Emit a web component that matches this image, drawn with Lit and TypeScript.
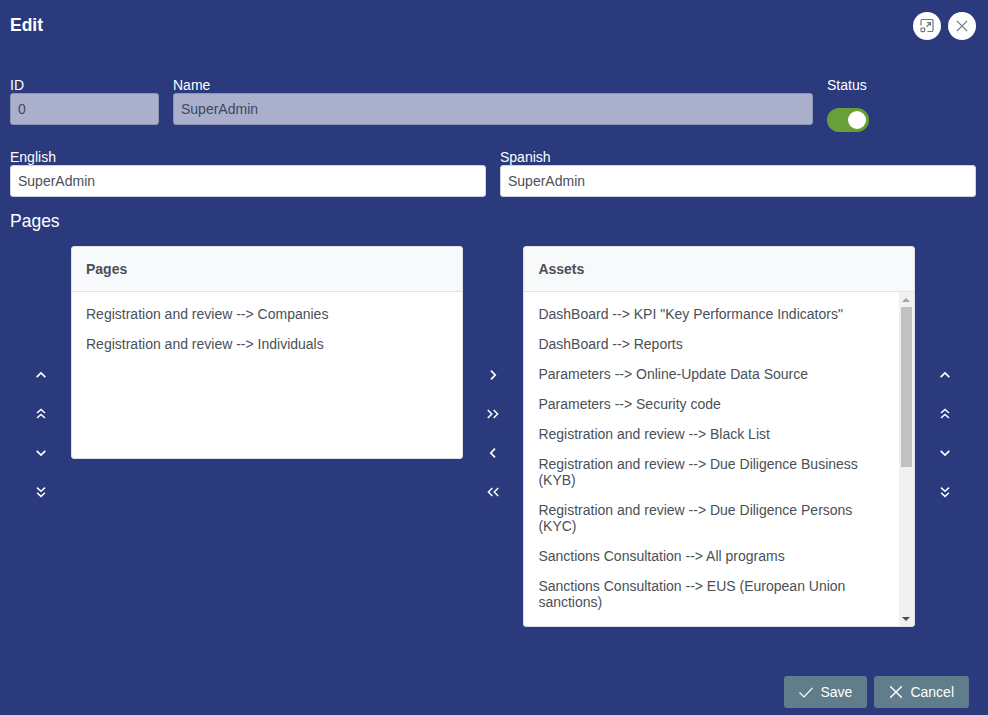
import { LitElement, html, css, svg } from "lit";
import { customElement } from "lit/decorators.js";

const icon = (body: unknown) =>
  html`<svg class="chev" viewBox="0 0 14 14" width="14" height="14" fill="none" stroke="currentColor" stroke-width="1.7">${body}</svg>`;

const up = svg`<path d="M2.7 9.2 7 5l4.3 4.2"/>`;
const dup = svg`<path stroke-width="1.5" d="M3 6 7 2.4 11 6M3 11 7 7.4l4 3.6"/>`;
const down = svg`<path d="M2.7 4.8 7 9l4.3-4.2"/>`;
const ddown = svg`<path stroke-width="1.5" d="M3 2.6 7 6.2l4-3.6M3 7.8l4 3.6 4-3.6"/>`;
const right = svg`<path d="M5 2.7 9.2 7 5 11.3"/>`;
const dright = svg`<path stroke-width="1.5" d="M1.8 3 5.8 7l-4 4M7.6 3l4 4-4 4"/>`;
const left = svg`<path d="M9 2.7 4.8 7 9 11.3"/>`;
const dleft = svg`<path stroke-width="1.5" d="M6.4 3 2.4 7l4 4M12.2 3l-4 4 4 4"/>`;

const assets = [
  'DashBoard --> KPI "Key Performance Indicators"',
  "DashBoard --> Reports",
  "Parameters --> Online-Update Data Source",
  "Parameters --> Security code",
  "Registration and review --> Black List",
  "Registration and review --> Due Diligence Business (KYB)",
  "Registration and review --> Due Diligence Persons (KYC)",
  "Sanctions Consultation --> All programs",
  "Sanctions Consultation --> EUS (European Union sanctions)",
];
const pages = ["Registration and review --> Companies", "Registration and review --> Individuals"];

@customElement("app-root")
export class AppRoot extends LitElement {
  static styles = css`
    :host {
      display: block;
      box-sizing: border-box;
      width: 988px;
      height: 715px;
      background: #2a3a7d;
      color: #fff;
      font: 14px/16px "Liberation Sans", Arial, sans-serif;
      padding: 12px 12px 0 10px;
    }
    * { box-sizing: border-box; }
    .head { display: flex; align-items: flex-start; height: 65px; }
    .title { font-size: 17.5px; font-weight: 700; line-height: 21px; margin-top: 3px; flex: 1; }
    .round {
      width: 28px; height: 28px; border-radius: 50%; background: #fff; color: #6c757d;
      display: flex; align-items: center; justify-content: center; margin-left: 7px;
    }
    .row1 { display: grid; grid-template-columns: 149px 1fr 149px; column-gap: 14px; height: 55px; }
    .row2 { display: grid; grid-template-columns: 1fr 1fr; column-gap: 14px; margin-top: 17px; }
    .field { display: flex; flex-direction: column; }
    input {
      width: 100%; height: 32px; border: 1px solid #ced4da; border-radius: 3px; padding: 0 7px;
      font: 14px "Liberation Sans", Arial, sans-serif; color: #495057; background: #fff; outline: none;
    }
    input:disabled { opacity: 0.6; }
    .toggle {
      width: 42px; height: 24px; border-radius: 12px; background: #689f38; margin-top: 15px;
      display: flex; justify-content: flex-end; align-items: center; padding-right: 3.5px;
    }
    .toggle i { display: block; width: 18px; height: 18px; border-radius: 50%; background: #fff; }
    h2 { font-size: 17.5px; line-height: 21px; font-weight: 400; margin: 14px 0; }
    .pick { display: flex; height: 381px; }
    .ctrl {
      display: flex; flex-direction: column; align-items: center; justify-content: center;
      gap: 7px; padding-bottom: 6px; color: #fff;
    }
    .ctrl.l { width: 61px; }
    .ctrl.c { width: 60.4px; }
    .ctrl.r { width: 60px; }
    .ctrl span { height: 32px; display: flex; align-items: center; justify-content: center; }
    .panel {
      width: 392px; background: #fff; border: 1px solid #dee2e6; border-radius: 3px;
      color: #495057; display: flex; flex-direction: column;
    }
    .panel.short { height: 213px; }
    .panel.wide { width: 391.6px; }
    .phead {
      height: 45px; flex: none; background: #f8f9fa; border-bottom: 1px solid #dee2e6;
      border-radius: 3px 3px 0 0;
      font-weight: 700; padding: 0 14px; display: flex; align-items: center;
    }
    .pbody { flex: 1; display: flex; min-height: 0; }
    .items { flex: 1; padding-top: 7px; }
    .item { padding: 7px 14px; }
    .bar {
      width: 15px; flex: none; background: #f1f1f1; display: flex; flex-direction: column; align-items: center;
      border-radius: 0 0 3px 0;
    }
    .arrow { width: 0; height: 0; border-left: 4px solid transparent; border-right: 4px solid transparent; }
    .arrow.u { border-bottom: 4px solid #a3a3a3; margin-top: 6px; }
    .arrow.d { border-top: 4px solid #505050; margin-top: auto; margin-bottom: 5px; }
    .thumb { width: 11px; height: 160px; background: #c1c1c1; margin-top: 5px; }
    .foot { display: flex; justify-content: flex-end; gap: 7px; margin-top: 49px; padding-right: 7px; }
    .btn {
      height: 32px; background: #607d8b; border-radius: 3px; padding: 0 15px;
      display: flex; align-items: center; gap: 7px; color: #fff;
    }
  `;

  private ctrl(cls: string, icons: unknown[]) {
    return html`<div class="ctrl ${cls}">${icons.map((b) => html`<span>${icon(b)}</span>`)}</div>`;
  }

  render() {
    return html`
      <div class="head">
        <div class="title">Edit</div>
        <div class="round">
          <svg viewBox="0 0 14 14" width="14" height="14" fill="none" stroke="currentColor" stroke-width="1.2">
            <path d="M1 6.5V2a1.5 1.5 0 0 1 1.5-1.5h9A1.5 1.5 0 0 1 13 2v9a1.5 1.5 0 0 1-1.5 1.5H7.5"/>
            <rect x="1" y="9" width="3.6" height="3.6" rx=".8"/>
            <path d="M6.5 7.8 10.2 4M7.2 3.6h3.2v3.2"/>
          </svg>
        </div>
        <div class="round">
          <svg viewBox="0 0 14 14" width="14" height="14" fill="none" stroke="currentColor" stroke-width="1.2">
            <path d="M1.8 1.8l10.4 10.4M12.2 1.8 1.8 12.2"/>
          </svg>
        </div>
      </div>
      <div class="row1">
        <div class="field"><label>ID</label><input disabled .value=${"0"} /></div>
        <div class="field"><label>Name</label><input disabled .value=${"SuperAdmin"} /></div>
        <div class="field"><label>Status</label><div class="toggle"><i></i></div></div>
      </div>
      <div class="row2">
        <div class="field"><label>English</label><input .value=${"SuperAdmin"} /></div>
        <div class="field"><label>Spanish</label><input .value=${"SuperAdmin"} /></div>
      </div>
      <h2>Pages</h2>
      <div class="pick">
        ${this.ctrl("l", [up, dup, down, ddown])}
        <div class="panel short">
          <div class="phead">Pages</div>
          <div class="pbody"><div class="items">${pages.map((p) => html`<div class="item">${p}</div>`)}</div></div>
        </div>
        ${this.ctrl("c", [right, dright, left, dleft])}
        <div class="panel wide">
          <div class="phead">Assets</div>
          <div class="pbody">
            <div class="items">${assets.map((p) => html`<div class="item">${p}</div>`)}</div>
            <div class="bar"><div class="arrow u"></div><div class="thumb"></div><div class="arrow d"></div></div>
          </div>
        </div>
        ${this.ctrl("r", [up, dup, down, ddown])}
      </div>
      <div class="foot">
        <div class="btn">
          <svg viewBox="0 0 14 14" width="14" height="14" fill="none" stroke="currentColor" stroke-width="1.2"><path d="M.5 7.5 5 12 13.5 2.8"/></svg>
          Save
        </div>
        <div class="btn">
          <svg viewBox="0 0 14 14" width="14" height="14" fill="none" stroke="currentColor" stroke-width="1.4"><path d="M1.2 1.2l11.6 11.6M12.8 1.2 1.2 12.8"/></svg>
          Cancel
        </div>
      </div>
    `;
  }
}
